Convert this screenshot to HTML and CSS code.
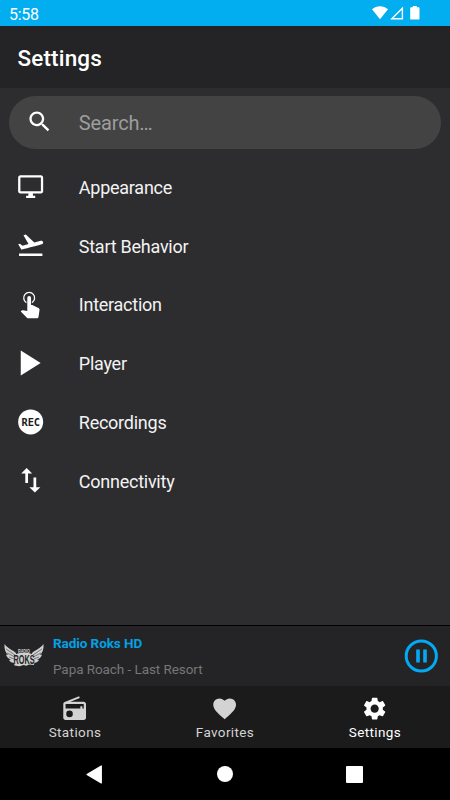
FILE: index.html
```html
<!DOCTYPE html>
<html lang="en">
<head>
<meta charset="utf-8">
<title>Settings</title>
<link rel="stylesheet" href="styles.css">
</head>
<body>
<div class="status">
  <span class="clock">5:58</span>
  <svg class="status-icons" width="50" height="16" viewBox="0 0 50 16" fill="#fff"><path d="M0 3.200C4.700-.7 11.300-.7 16 3.200L8 13.300Z"/><path d="M19.800 12.800H30.400V2.300Z" fill="none" stroke="#fff" stroke-width="1.400"/><path d="M40.800 0h4v1.300h1.800q.9 0 .9.900v10.500q0 .9-.9.900h-7.500q-.9 0-.9-.9V2.200q0-.9.9-.9h1.700z"/></svg>
</div>
<header class="header"><h1>Settings</h1></header>
<main class="content">
  <div class="search">
    <svg class="icon" viewBox="0 0 24 24"><path d="M15.500 14h-.790l-.280-.270C15.410 12.590 16 11.110 16 9.500 16 5.910 13.090 3 9.500 3S3 5.910 3 9.500 5.910 16 9.500 16c1.610 0 3.090-.590 4.230-1.570l.270.280v.790l5 4.990L20.490 19l-4.990-5zm-6 0C7.010 14 5 11.990 5 9.500S7.010 5 9.500 5 14 7.010 14 9.500 11.990 14 9.500 14z"/></svg>
    <span>Search…</span>
  </div>
  <ul class="list">
    <li><svg class="icon" viewBox="0 0 24 24"><path d="M21 2H3c-1.100 0-2 .9-2 2v12c0 1.100.9 2 2 2h7v2H8v2h8v-2h-2v-2h7c1.100 0 2-.9 2-2V4c0-1.100-.9-2-2-2zm0 14H3V4h18v12z" transform="translate(0 -.9)"/></svg><span>Appearance</span></li>
    <li><svg class="icon" viewBox="0 0 24 24"><path d="M2.500 19h19v2h-19zm19.570-9.360c-.210-.8-1.040-1.280-1.840-1.060L14.920 10l-6.900-6.430-1.930.510 4.140 7.170-4.970 1.330-1.970-1.540-1.450.390 2.590 4.490s7.120-1.900 16.570-4.430c.810-.230 1.280-1.050 1.070-1.850z" transform="translate(-.9 -1.600) scale(1.080)"/></svg><span>Start Behavior</span></li>
    <li><svg class="icon" viewBox="0 0 24 24"><path d="M8.300 10.200a4.800 4.800 0 1 1 4.800 0" fill="none" stroke="#fff" stroke-width="1.150"/><path d="M9.050 6.100a1.650 1.650 0 0 1 3.300 0v6.300h.9c.2 0 .4.040.6.130l5 2.500c.6.250 1 .84 1 1.520l-.9 6.020c-.12.820-.76 1.430-1.600 1.430H9.900c-.46 0-.88-.18-1.180-.48L3.300 18.100l.87-.88c.22-.22.530-.36.870-.36l.260.030 3.750.8z"/></svg><span>Interaction</span></li>
    <li><svg class="icon" viewBox="0 0 24 24"><path d="M3.300 .4v22L20.800 11.400z"/></svg><span>Player</span></li>
    <li><svg class="icon" viewBox="0 0 24 24"><circle cx="12" cy="11.400" r="11"/><text x="3.900" y="14.600" class="rec" textLength="16.400" lengthAdjust="spacingAndGlyphs">REC</text></svg><span>Recordings</span></li>
    <li><svg class="icon" viewBox="0 0 24 24"><path d="M16 17.010V10h-2v7.010h-3L15 21l4-3.990h-3zM9 3L5 6.990h3V14h2V6.990h3L9 3z" transform="translate(-2.300 -2.700) scale(1.200)"/></svg><span>Connectivity</span></li>
  </ul>
</main>
<section class="player">
  <svg class="logo" width="40" height="28" viewBox="0 -2 40 28"><g fill="#cfcfcf"><path d="M.5 0C4 5 9 6 12 9L11 19C8 19 6 18 5 16L7 15.500C4 15 2.500 12.500 2 10.500L4 11C1.500 8.500 0 5 .5 0Z"/><path d="M39.500 0C36 5 31 6 28 9L29 19C32 19 34 18 35 16L33 15.500C36 15 37.500 12.500 38 10.500L36 11C38.500 8.500 40 5 39.500 0Z"/><path d="M8.500 11l7-2h9l7 2-1.500 10-5-.5-2.500 1.200-3-.7-4 1.200-5-.7z"/></g><path d="M2 5l9 6M3 9l8 4M5 13l5 2M38 5l-9 6M37 9l-8 4M35 13l-5 2" stroke="#39393a" stroke-width=".6"/><text x="14" y="8.500" class="logo-small" textLength="12" lengthAdjust="spacingAndGlyphs">RADIO</text><text x="9.500" y="19.500" class="logo-big" textLength="21" lengthAdjust="spacingAndGlyphs">ROKS</text></svg>
  <div class="track"><strong>Radio Roks HD</strong><span>Papa Roach - Last Resort</span></div>
  <svg class="pause" width="34" height="34" viewBox="0 0 34 34"><circle cx="17.300" cy="17" r="15.100" fill="none" stroke="#03a9f4" stroke-width="3"/><path d="M12.200 10.500h3.600v13h-3.600zM19.200 10.500h3.600v13h-3.600z" fill="#03a9f4"/></svg>
</section>
<nav class="tabs">
  <div class="tab"><svg class="tab-icon" viewBox="0 0 24 24"><path d="M3.240 6.150C2.510 6.430 2 7.170 2 8v12c0 1.100.89 2 2 2h16c1.110 0 2-.9 2-2V8c0-1.110-.89-2-2-2H8.300l8.260-3.340L15.880 1 3.240 6.150zM7.500 19.500a2.900 2.900 0 1 1 0-5.800 2.900 2.900 0 0 1 0 5.800zM20 11.800h-1.200v-1.800h-1.800v1.800H4V8h16z"/></svg><span>Stations</span></div>
  <div class="tab"><svg class="tab-icon" viewBox="0 0 24 24"><path d="M12 21.350l-1.450-1.320C5.400 15.360 2 12.280 2 8.500 2 5.420 4.420 3 7.500 3c1.740 0 3.410.81 4.500 2.090C13.090 3.810 14.760 3 16.500 3 19.580 3 22 5.420 22 8.500c0 3.780-3.400 6.860-8.550 11.540L12 21.350z"/></svg><span>Favorites</span></div>
  <div class="tab active"><svg class="tab-icon" viewBox="0 0 24 24"><path d="M19.140 12.940c.040-.3.060-.610.060-.940 0-.320-.020-.640-.070-.940l2.030-1.580c.180-.140.230-.410.120-.610l-1.920-3.320c-.120-.220-.370-.290-.590-.220l-2.390.960c-.5-.380-1.030-.7-1.620-.940l-.360-2.540c-.040-.240-.240-.410-.480-.410h-3.840c-.240 0-.430.170-.470.410l-.360 2.540c-.590.240-1.130.570-1.620.940l-2.390-.96c-.220-.080-.470 0-.590.220L2.740 8.870c-.120.210-.080.470.120.610l2.030 1.580c-.050.300-.090.630-.090.940s.020.640.070.940l-2.030 1.580c-.180.140-.230.410-.120.610l1.920 3.320c.120.220.370.290.590.220l2.390-.96c.5.380 1.030.7 1.620.94l.360 2.540c.050.240.240.410.480.410h3.840c.240 0 .440-.170.470-.410l.36-2.540c.590-.24 1.130-.56 1.620-.94l2.390.96c.220.080.470 0 .590-.220l1.920-3.320c.120-.220.070-.470-.120-.610l-2.010-1.580zM12 15.600c-1.980 0-3.600-1.620-3.600-3.600s1.620-3.600 3.600-3.600 3.600 1.620 3.600 3.600-1.620 3.600-3.600 3.600z"/></svg><span>Settings</span></div>
</nav>
<div class="system">
  <svg width="17" height="19" viewBox="0 0 17 19"><path d="M15.300 1v17L1 9.500z" fill="#fff" stroke="#fff" stroke-width="1.200" stroke-linejoin="round"/></svg>
  <i class="home"></i>
  <i class="recent"></i>
</div>
</body>
</html>
```
FILE: styles.css
```css
* { box-sizing: border-box; }
body {
  margin: 0;
  width: 450px;
  height: 800px;
  display: flex;
  flex-direction: column;
  overflow: hidden;
  background: #2d2d2f;
  color: #f3f3f3;
  font-family: Roboto, "Liberation Sans", sans-serif;
}
svg { display: block; flex: none; overflow: visible; }
.status {
  height: 26px;
  flex: none;
  display: flex;
  justify-content: space-between;
  padding: 6px 28px 0 9px;
  background: #02adf0;
  color: #fff;
}
.clock { font-size: 16px; line-height: 17px; letter-spacing: -.3px; }
.header {
  height: 62px;
  flex: none;
  display: flex;
  align-items: center;
  padding: 2px 17.500px 0;
  background: #242426;
}
h1 { margin: 0; font-size: 22.500px; font-weight: 500; line-height: 28px; letter-spacing: .15px; color: #fff; }
.content { flex: 1; padding-top: 8px; }
.icon { width: 27.300px; height: 27.300px; fill: #fff; }
.search {
  height: 53px;
  margin: 0 9px;
  padding: 0 17px 1px;
  display: flex;
  align-items: center;
  gap: 25.500px;
  border-radius: 27px;
  background: #434343;
  color: #9d9d9d;
  font-size: 20px;
  letter-spacing: -.15px;
}
.search span { padding-top: 2px; }
.list { list-style: none; margin: 9px 0 0; padding: 0; }
.list li {
  height: 58.750px;
  padding: 0 17px;
  display: flex;
  align-items: center;
  gap: 34.500px;
  font-size: 18px;
  letter-spacing: -.25px;
}
.rec { font: bold 9px "DejaVu Sans Mono", monospace; letter-spacing: 0; fill: #1c1c1c; }
.player {
  height: 61px;
  flex: none;
  display: flex;
  align-items: center;
  padding: 0 12px 0 4px;
  border-top: 1px solid #000;
  background: #242426;
}
.logo { margin-right: 9px; }
.logo-small { font: bold 5px "Liberation Sans", sans-serif; fill: #cfcfcf; }
.logo-big { font: bold 12px "Liberation Sans", sans-serif; fill: #232325; }
.track { flex: 1; display: flex; flex-direction: column; gap: 10px; font-size: 13.500px; line-height: 16px; letter-spacing: -.07px; }
.track strong { color: #03a0e4; font-weight: 700; }
.track span { color: #767676; }
.tabs { height: 62px; flex: none; display: flex; background: #1b1b1b; }
.tab { flex: 1; display: flex; flex-direction: column; align-items: center; padding-top: 8.500px; color: #d3d3d3; font-size: 13.500px; line-height: 16px; letter-spacing: .38px; }
.tab.active { color: #fff; }
.tab-icon { width: 27.300px; height: 27.300px; fill: currentColor; margin-bottom: 2.500px; }
.system { height: 52px; flex: none; display: flex; align-items: center; justify-content: space-between; padding: 0 87px 0 86px; background: #000; }
.home { width: 16px; height: 16px; border-radius: 50%; background: #fff; }
.recent { width: 17px; height: 17px; border-radius: 1px; background: #fff; }
```
